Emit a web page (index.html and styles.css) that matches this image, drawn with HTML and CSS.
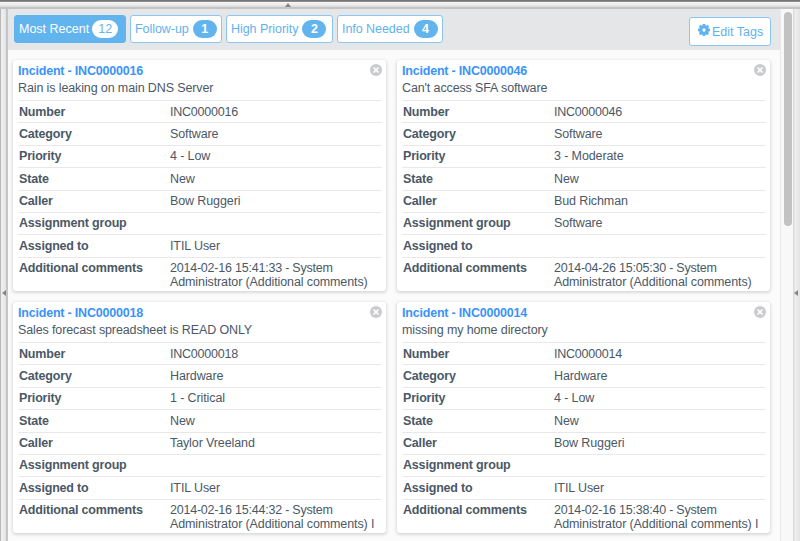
FILE: index.html
```html
<!DOCTYPE html>
<html lang="en">
<head>
<meta charset="utf-8">
<title>Incidents</title>
<link rel="stylesheet" href="styles.css">
</head>
<body>
<svg class="defs" width="0" height="0" aria-hidden="true">
  <symbol id="close" viewBox="0 0 12 12"><circle cx="6" cy="6" r="6" fill="#c9cbce"/><path d="M3.5 3.5 8.5 8.5M8.5 3.5 3.5 8.5" stroke="#fff" stroke-width="1.7"/></symbol>
</svg>
<div class="split-top"><i class="arrow-up"></i></div>
<div class="frame">
  <div class="split-left"><i class="arrow-left"></i></div>
  <div class="content">
    <header class="toolbar">
      <nav class="tabs">
        <a class="tab active">Most Recent<b class="badge wide">12</b></a>
        <a class="tab follow">Follow-up<b class="badge">1</b></a>
        <a class="tab high">High Priority<b class="badge">2</b></a>
        <a class="tab info">Info Needed<b class="badge">4</b></a>
      </nav>
      <a class="edit"><svg width="12" height="12" viewBox="0 0 12 12"><g fill="#5fb2ee"><path id="t" d="M4.7 0h2.6l.4 3h-3.4zM4.7 12h2.6l.4-3h-3.4z"/><use href="#t" transform="rotate(45 6 6)"/><use href="#t" transform="rotate(90 6 6)"/><use href="#t" transform="rotate(135 6 6)"/></g><circle cx="6" cy="6" r="3.1" fill="none" stroke="#5fb2ee" stroke-width="2.9"/></svg><span>Edit Tags</span></a>
    </header>
    <main class="cards">
      <section class="card">
        <svg class="close"><use href="#close"/></svg>
        <h2>Incident - INC0000016</h2><p>Rain is leaking on main DNS Server</p>
        <dl>
          <div><dt>Number</dt><dd class="num">INC0000016</dd></div>
          <div><dt>Category</dt><dd>Software</dd></div>
          <div><dt>Priority</dt><dd>4 - Low</dd></div>
          <div><dt>State</dt><dd>New</dd></div>
          <div><dt>Caller</dt><dd>Bow Ruggeri</dd></div>
          <div><dt>Assignment group</dt><dd></dd></div>
          <div><dt>Assigned to</dt><dd>ITIL User</dd></div>
          <div><dt>Additional comments</dt><dd><span class="num">2014-02-16 15:41:33 - System</span><br>Administrator (Additional comments)</dd></div>
        </dl>
      </section>
      <section class="card">
        <svg class="close"><use href="#close"/></svg>
        <h2>Incident - INC0000046</h2><p>Can't access SFA software</p>
        <dl>
          <div><dt>Number</dt><dd class="num">INC0000046</dd></div>
          <div><dt>Category</dt><dd>Software</dd></div>
          <div><dt>Priority</dt><dd>3 - Moderate</dd></div>
          <div><dt>State</dt><dd>New</dd></div>
          <div><dt>Caller</dt><dd>Bud Richman</dd></div>
          <div><dt>Assignment group</dt><dd>Software</dd></div>
          <div><dt>Assigned to</dt><dd></dd></div>
          <div><dt>Additional comments</dt><dd><span class="num">2014-04-26 15:05:30 - System</span><br>Administrator (Additional comments)</dd></div>
        </dl>
      </section>
      <section class="card">
        <svg class="close"><use href="#close"/></svg>
        <h2>Incident - INC0000018</h2><p>Sales forecast spreadsheet is READ ONLY</p>
        <dl>
          <div><dt>Number</dt><dd class="num">INC0000018</dd></div>
          <div><dt>Category</dt><dd>Hardware</dd></div>
          <div><dt>Priority</dt><dd>1 - Critical</dd></div>
          <div><dt>State</dt><dd>New</dd></div>
          <div><dt>Caller</dt><dd>Taylor Vreeland</dd></div>
          <div><dt>Assignment group</dt><dd></dd></div>
          <div><dt>Assigned to</dt><dd>ITIL User</dd></div>
          <div><dt>Additional comments</dt><dd><span class="num">2014-02-16 15:44:32 - System</span><br>Administrator (Additional comments) I</dd></div>
        </dl>
      </section>
      <section class="card">
        <svg class="close"><use href="#close"/></svg>
        <h2>Incident - INC0000014</h2><p>missing my home directory</p>
        <dl>
          <div><dt>Number</dt><dd class="num">INC0000014</dd></div>
          <div><dt>Category</dt><dd>Hardware</dd></div>
          <div><dt>Priority</dt><dd>4 - Low</dd></div>
          <div><dt>State</dt><dd>New</dd></div>
          <div><dt>Caller</dt><dd>Bow Ruggeri</dd></div>
          <div><dt>Assignment group</dt><dd></dd></div>
          <div><dt>Assigned to</dt><dd>ITIL User</dd></div>
          <div><dt>Additional comments</dt><dd><span class="num">2014-02-16 15:38:40 - System</span><br>Administrator (Additional comments) I</dd></div>
        </dl>
      </section>
    </main>
  </div>
  <div class="scroll"><div class="thumb"></div></div>
  <div class="split-right"><i class="arrow-left"></i></div>
</div>
</body>
</html>
```
FILE: styles.css
```css
* { box-sizing: border-box; }
body {
  margin: 0;
  height: 541px;
  overflow: hidden;
  display: flex;
  flex-direction: column;
  font: 12.5px/14px "Liberation Sans", Arial, sans-serif;
  color: #4b5866;
}
.defs { position: absolute; }
.split-top {
  height: 9px;
  flex: none;
  display: flex;
  align-items: flex-start;
  padding: 3px 0 0 285px;
  background: linear-gradient(#777 0 1px, #8a8a8a 1px 2px, #f4f4f4 2px 3px, #e4e4e4 6px, #d4d4d4 7px, #c3c3c3 7px 9px);
}
.arrow-up { border: 3px solid transparent; border-top: 0; border-bottom: 4px solid #858585; }
.arrow-left { border: 3.5px solid transparent; border-left: 0; border-right: 4px solid #858585; }
.frame { flex: 1; min-height: 0; display: flex; }
.split-left {
  width: 8px;
  flex: none;
  padding: 281px 0 0 2px;
  display: flex;
  align-items: flex-start;
  background: linear-gradient(90deg, #b9b9b9 0 1px, #eee 1px 3px, #e1e1e1 6px, #c6c6c6 6px 8px);
}
.content { width: 772px; flex: none; background: #fbfbfb; }
.toolbar {
  height: 41px;
  background: #e4e6e8;
  display: flex;
  justify-content: space-between;
  padding: 6px 9px 0 6px;
  color: #5fb2ee;
}
.tabs { display: flex; gap: 4px; }
.tab {
  width: 112px;
  height: 28px;
  display: flex;
  align-items: center;
  padding: 0 0 0 4px;
  border: 1px solid #8ac6f2;
  border-radius: 3px;
  background: #fff;
}
.follow { width: 92px; }
.high { width: 107px; }
.info { width: 106px; }
.active { background: #62b4ef; border-color: #62b4ef; color: #fff; }
.badge {
  width: 24px;
  height: 18px;
  border-radius: 9px;
  margin-left: 4px;
  background: #62b4ef;
  color: #fff;
  text-align: center;
  line-height: 18px;
}
.follow, .high, .info { letter-spacing: -.05px; }
.wide { width: 26px; margin-left: 3px; background: #fff; color: #62b4ef; font-weight: 400; }
.edit {
  width: 82px;
  height: 29px;
  margin-top: 2px;
  border: 1px solid #8ac6f2;
  border-radius: 3px;
  background: #fff;
  display: flex;
  align-items: center;
  gap: 2px;
  padding-left: 8px;
}
.edit svg { margin-bottom: 3px; }
.cards {
  display: grid;
  grid-template-columns: 373px 373px;
  gap: 11px;
  padding: 10px 5px;
}
.card {
  position: relative;
  height: 231px;
  background: #fff;
  border-radius: 3px;
  box-shadow: 0 1px 3px 1px rgba(0, 0, 0, .13);
  padding: 4px 4px 0 5px;
}
.close { position: absolute; top: 4px; right: 4px; width: 12px; height: 12px; }
h2 { margin: 0; font-size: 12.5px; line-height: 15px; color: #3a93f8; letter-spacing: -.2px; }
p { margin: 1px 0 0; line-height: 16px; letter-spacing: -.12px; }
dl { margin: 4px 0 0; }
dl div {
  display: grid;
  grid-template-columns: 151px 1fr;
  min-height: 22.4px;
  border-top: 1px solid #e8e8e8;
  padding: 3.5px 0 0 1px;
}
dt { font-weight: 700; letter-spacing: -.18px; }
dd { margin: 0; white-space: nowrap; letter-spacing: -.11px; }
.num { letter-spacing: -.22px; }
.scroll {
  width: 13px;
  flex: none;
  border-left: 1px solid #e9e9e9;
  background: #f8f8f8;
  padding: 3px 0 0 3px;
}
.thumb { width: 8px; height: 214px; border-radius: 4px; background: #c2c2c2; }
.split-right {
  flex: 1;
  padding: 281px 0 0 1px;
  display: flex;
  align-items: flex-start;
  background: linear-gradient(90deg, #dadada 0 1px, #efefef 2px, #e2e2e2);
}
```
